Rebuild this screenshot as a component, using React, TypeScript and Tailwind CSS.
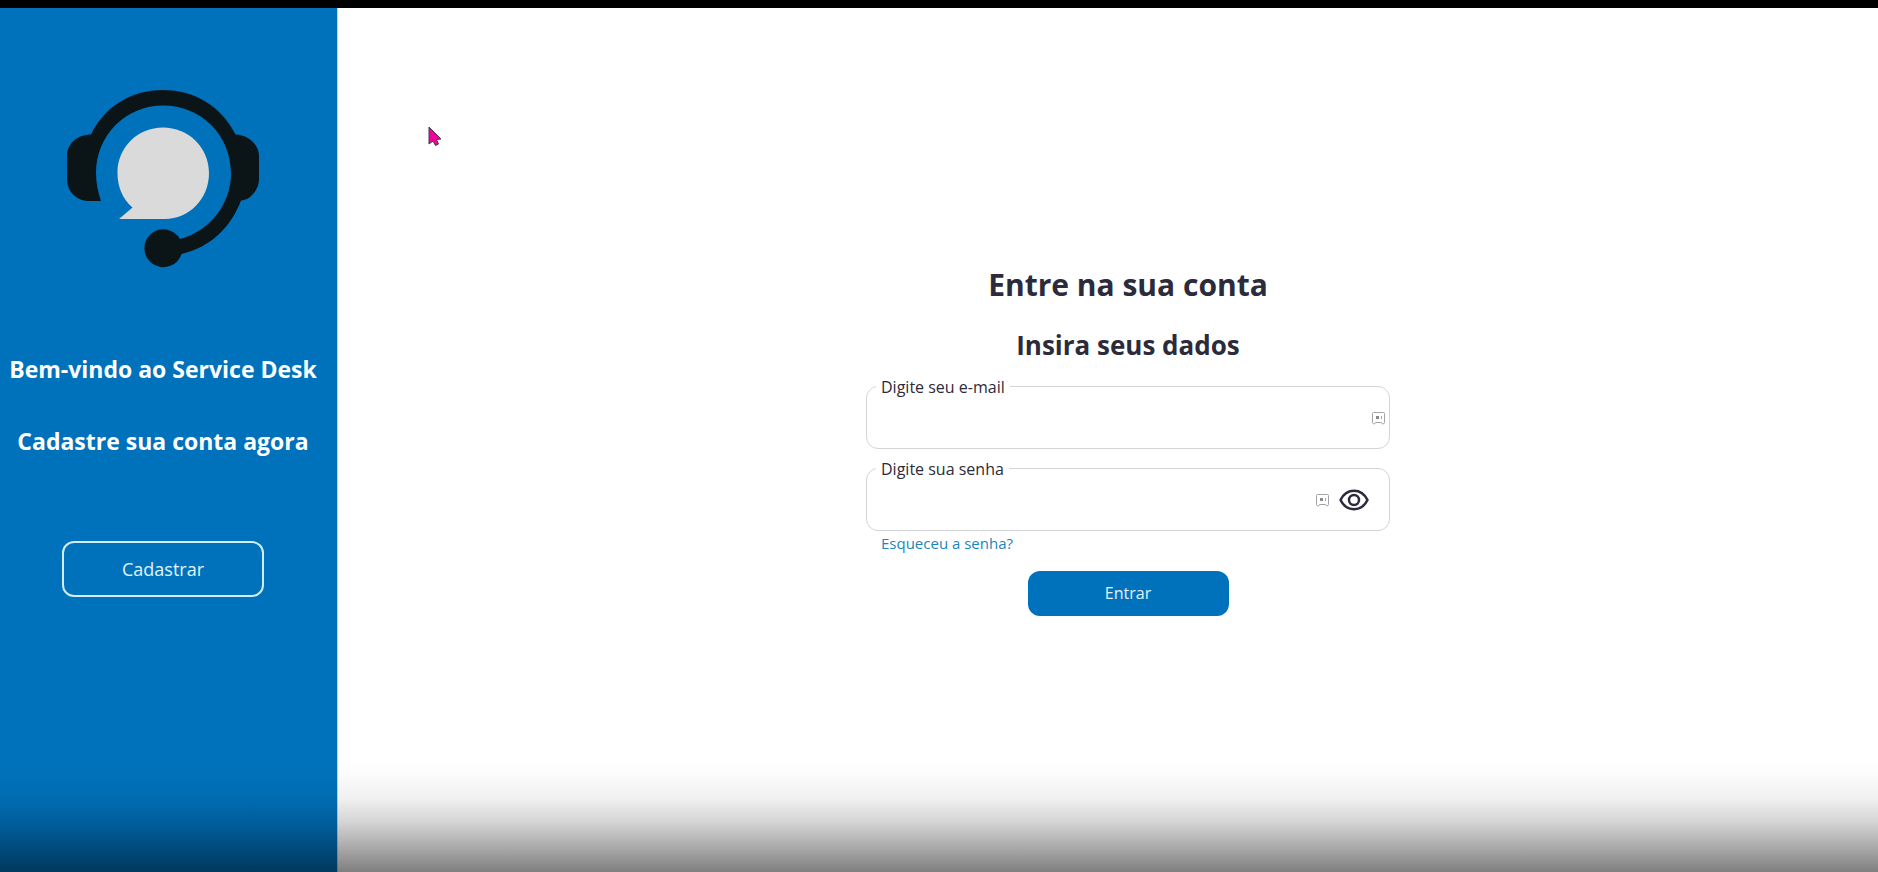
import { useState } from "react";

function HeadsetLogo() {
  return (
    <svg viewBox="0 0 192 178" className="w-48 shrink-0" role="img" aria-label="Service Desk">
      <path
        fill="#0b1417"
        d="M24 44.500 C37 17 64 0 96 0 C128 0 155 17 168.500 44.500 C182 45 192 55 192 66 V89 C192 100 183 110 174 110.500 C164 137 144 157 114.500 164 A19 19 0 1 1 113 149 C143 141 164 114 164 83.500 C164 45 134 15.500 96 15.500 C59 15.500 29 45 29 83 C29 93 31 102 34 111 H22 C9 111 0 101 0 89 V66 C0 54 10 44.500 24 44.500 Z"
      />
      <path
        fill="#dadada"
        d="M52 129 L65.500 117.500 C55.500 109 50.500 97 50.500 83 C50.500 57 71 37.500 96 37.500 C121 37.500 142 57 142 83 C142 109 122 129 98 129 Z"
      />
    </svg>
  );
}

function VaultIcon() {
  return (
    <svg viewBox="0 0 13 13" className="size-[13px] shrink-0" fill="none" stroke="#a3a3a3" aria-hidden="true">
      <path d="M1.500 .5 H11.500 Q12.500 .5 12.500 1.500 V10.500 L11.500 12 H10.500 L9.500 10.500 H3.500 L2.500 12 H1.500 L.5 10.500 V1.500 Q.5 .5 1.500 .5 Z" />
      <rect x="4" y="4" width="3" height="3" fill="#8a8a8a" stroke="none" />
      <path d="M9.500 4 V7" />
    </svg>
  );
}

function EyeIcon() {
  return (
    <svg viewBox="0 0 30 22" className="w-[30px]" fill="none" stroke="#2b2b3c" strokeWidth="2.500" aria-hidden="true">
      <path d="M1.500 11 C4.500 5 9 1.800 15 1.800 C21 1.800 25.500 5 28.500 11 C25.500 17 21 20.200 15 20.200 C9 20.200 4.500 17 1.500 11 Z" strokeLinejoin="round" />
      <circle cx="15" cy="11" r="5" />
    </svg>
  );
}

function Pointer() {
  return (
    <svg viewBox="0 0 14 20" className="absolute left-[428px] top-[118px] w-[14px]" aria-hidden="true">
      <path d="M1 1 V18 L5 15 L7.500 19.500 L10.500 18 L8.500 13.500 L13 13 Z" fill="#f0059b" stroke="#4a3550" strokeWidth="1" />
    </svg>
  );
}

export default function App() {
  const [showPassword, setShowPassword] = useState(false);
  return (
    <div className="relative flex min-h-screen flex-col border-t-8 border-black bg-white font-['Open_Sans','Noto_Sans',sans-serif] text-[#2b2b3c]">
      <div className="flex grow">
        <aside className="flex w-[338px] shrink-0 flex-col items-center border-r border-[#b5dcea] bg-[#0072bc] pr-[11px] pt-[82px] text-white">
          <HeadsetLogo />
          <h2 className="mt-[85px] whitespace-nowrap text-[23px] font-bold leading-8">Bem-vindo ao Service Desk</h2>
          <h2 className="mt-10 whitespace-nowrap text-[23px] font-bold leading-8">Cadastre sua conta agora</h2>
          <button type="button" className="mt-[84px] h-14 w-[202px] rounded-xl border-2 border-[#d3ecfa] pt-px text-[18px] text-[#e3f3fc]">
            Cadastrar
          </button>
        </aside>

        <main className="flex grow flex-col items-center justify-center pl-10">
          <form className="flex w-[524px] flex-col items-center" onSubmit={(e) => e.preventDefault()}>
            <h1 className="text-[30px] font-bold leading-10">Entre na sua conta</h1>
            <h2 className="mt-5 text-[26px] font-bold leading-10">Insira seus dados</h2>

            <fieldset className="mt-2.5 w-full rounded-xl border border-[#d4d4d4] pr-1">
              <legend className="ml-[9px] px-[5px] text-[16px] leading-6">
                <label htmlFor="email">Digite seu e-mail</label>
              </legend>
              <div className="flex h-[49px] items-center pb-2.5">
                <input id="email" type="email" className="h-full min-w-0 grow px-3 outline-none" />
                <VaultIcon />
              </div>
            </fieldset>

            <fieldset className="mt-2 w-full rounded-xl border border-[#d4d4d4] pr-5">
              <legend className="ml-[9px] px-[5px] text-[16px] leading-6">
                <label htmlFor="senha">Digite sua senha</label>
              </legend>
              <div className="flex h-[49px] items-center pb-2.5">
                <input id="senha" type={showPassword ? "text" : "password"} className="h-full min-w-0 grow px-3 outline-none" />
                <VaultIcon />
                <button type="button" aria-label="Mostrar senha" className="ml-[10px]" onClick={() => setShowPassword(!showPassword)}>
                  <EyeIcon />
                </button>
              </div>
            </fieldset>

            <a href="#senha" className="ml-[15px] self-start text-[15px] leading-6 text-[#1a86b8]">Esqueceu a senha?</a>
            <button type="submit" className="mt-4 h-[45px] w-[201px] rounded-xl bg-[#0072bc] text-[16px] text-[#e3f3fc]">
              Entrar
            </button>
          </form>
        </main>
      </div>
      <Pointer />
      <div className="pointer-events-none absolute inset-x-0 bottom-0 h-[116px] bg-[linear-gradient(to_bottom,rgba(0,0,0,0)_0%,rgba(0,0,0,0.01)_15%,rgba(0,0,0,0.06)_37%,rgba(0,0,0,0.17)_57%,rgba(0,0,0,0.33)_78%,rgba(0,0,0,0.5)_100%)]" />
    </div>
  );
}
